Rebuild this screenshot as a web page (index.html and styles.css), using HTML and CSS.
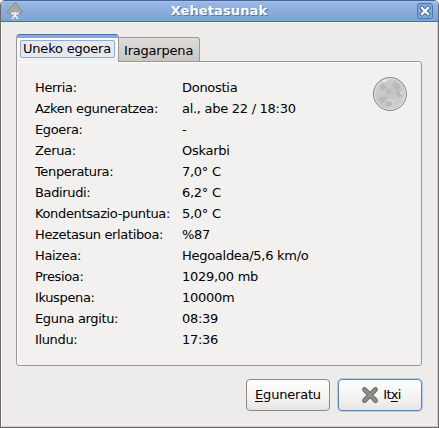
FILE: index.html
```html
<!DOCTYPE html>
<html lang="eu">
<head>
<meta charset="utf-8">
<title>Xehetasunak</title>
<link rel="stylesheet" href="styles.css">
</head>
<body>
<div class="window">
  <header class="titlebar">
    <svg class="app-icon" width="18" height="18" viewBox="0 0 18 18">
      <path d="M2.500 11.500 L1 9.500 L3.500 7.500 L5 4.500 L7.500 4 L8 1 L10.500 1 L11.500 4 L13 5 L14 7.500 L16.500 9 L15 11.500 L12 11 L9 12 L6 11 Z" fill="#a9a9a0" stroke="#85857c" stroke-width=".8"/>
      <path d="M9 10v4M5 11l4 1 4-1M9 13l-3 4M9 13l3 4" fill="none" stroke="#f4f6fa" stroke-width="1.300"/>
    </svg>
    <h1 class="title">Xehetasunak</h1>
    <svg class="close" width="16" height="16" viewBox="0 0 16 16">
      <rect x=".5" y=".5" width="15" height="15" rx="2.500" fill="#86a9d9" stroke="#4c76ae"/>
      <path d="M5 5l6 6M11 5l-6 6" stroke="#3e689f" stroke-width="4.400" stroke-linecap="square"/>
      <path d="M5 5l6 6M11 5l-6 6" stroke="#fff" stroke-width="2.300" stroke-linecap="square"/>
    </svg>
  </header>
  <main class="content">
    <nav class="tabs">
      <div class="tab active"><span class="focus">Uneko egoera</span></div>
      <div class="tab">Iragarpena</div>
    </nav>
    <section class="panel">
      <dl class="details">
        <dt>Herria:</dt><dd>Donostia</dd>
        <dt>Azken eguneratzea:</dt><dd>al., abe 22 / 18:30</dd>
        <dt>Egoera:</dt><dd>-</dd>
        <dt>Zerua:</dt><dd>Oskarbi</dd>
        <dt>Tenperatura:</dt><dd>7,0° C</dd>
        <dt>Badirudi:</dt><dd>6,2° C</dd>
        <dt>Kondentsazio-puntua:</dt><dd>5,0° C</dd>
        <dt>Hezetasun erlatiboa:</dt><dd>%87</dd>
        <dt>Haizea:</dt><dd>Hegoaldea/5,6 km/o</dd>
        <dt>Presioa:</dt><dd>1029,00 mb</dd>
        <dt>Ikuspena:</dt><dd>10000m</dd>
        <dt>Eguna argitu:</dt><dd>08:39</dd>
        <dt>Ilundu:</dt><dd>17:36</dd>
      </dl>
      <svg class="moon" width="36" height="36" viewBox="0 0 36 36">
        <defs><linearGradient id="m" x1="0" y1="0" x2="1" y2="1"><stop offset="0" stop-color="#d4d4d3"/><stop offset=".5" stop-color="#c4c4c2"/><stop offset="1" stop-color="#d6d6d4"/></linearGradient></defs>
        <circle cx="18" cy="18" r="16.500" fill="url(#m)" stroke="#858784"/>
        <circle cx="18" cy="18" r="15.500" fill="none" stroke="#dededd"/>
        <g fill="#b9b9b7">
          <circle cx="11" cy="11" r="3"/><circle cx="16.500" cy="15.500" r="2.500"/>
          <path d="M20 8q4-3 7 1t-1 5q-4 0-6-6M7 22q4-3 8 0l-2 4q-4 2-6-4M25 15q4-1 5 3t-4 3q-3-2-1-6"/>
        </g>
        <path d="M11 27l3-1-1-3 3 1 2-3 2 3 4-1-1 3 3 2-4 1-2 2-4 1-3-2z" fill="#d0d0ce"/>
        <ellipse cx="16.500" cy="28" rx="3" ry="2" fill="#bcbcba" stroke="#acacaa" stroke-width=".7"/>
        <circle cx="29.500" cy="17" r="1.300" fill="#e2e2e1"/>
        <path d="M11 5.500l4-1.500" stroke="#f2f2f2" stroke-width="1.500"/>
      </svg>
    </section>
    <footer class="actions">
      <button class="button"><span><u>E</u>guneratu</span></button>
      <button class="button default">
        <svg width="18" height="18" viewBox="0 0 18 18">
          <path d="M3.500 3.500l11 11M14.500 3.500l-11 11" stroke="#646661" stroke-width="4.800" stroke-linecap="round"/>
          <path d="M3.500 3.500l11 11M14.500 3.500l-11 11" stroke="#8e908b" stroke-width="3" stroke-linecap="round"/>
        </svg>
        <span>It<u>x</u>i</span>
      </button>
    </footer>
  </main>
</div>
</body>
</html>
```
FILE: styles.css
```css
* { box-sizing: border-box; }
body {
  margin: 0;
  background: #fff;
  font: 13px/21px "DejaVu Sans", sans-serif;
  color: #000;
}
.window {
  width: 439px;
  height: 428px;
  border: 1px solid #6b6867;
  border-top: 0;
  border-radius: 5px 5px 0 0;
  background: #edeceb;
  overflow: hidden;
}
.titlebar {
  display: flex;
  align-items: center;
  height: 22px;
  padding: 0 5px;
  border-top: 1px solid #45659a;
  border-bottom: 1px solid #4871a9;
  background: linear-gradient(#a9c4eb 0 1px, #98b7e5 1px, #7da2d3);
}
.title {
  flex: 1;
  margin: 0;
  padding-right: 3px;
  text-align: center;
  font-size: 13px;
  line-height: 20px;
  letter-spacing: 0.1px;
  color: #fff;
  text-shadow: 1px 1px 0 #4e76ad;
}
.content {
  height: 405px;
  padding: 12px 15px 0 14px;
  border-left: 1px solid #fff;
  border-right: 1px solid #cfcdca;
  border-bottom: 1px solid #cfcdca;
}
.tabs {
  display: flex;
  align-items: flex-end;
  height: 28px;
  margin-bottom: -1px;
  letter-spacing: -0.2px;
}
.tab {
  width: 81px;
  height: 25px;
  padding: 2px 0 0 5px;
  border: 1px solid #9b9895;
  border-left: 0;
  border-radius: 0 3px 0 0;
  background: linear-gradient(#dddcd9, #c9c7c3);
  white-space: nowrap;
}
.tab.active {
  position: relative;
  width: 103px;
  height: 28px;
  padding: 5px 3px 0;
  border: 1px solid #9b9895;
  border-top-color: #4871a9;
  border-bottom: 0;
  border-radius: 4px 4px 0 0;
  background: linear-gradient(#86a9d9 0 3px, #fff 3px, #f2f1f0);
}
.focus {
  display: block;
  width: 95px;
  height: 18px;
  padding-left: 2px;
  border: 1px solid #91abd3;
  border-radius: 2px;
  background: #e4e9f2;
  line-height: 15px;
}
.panel {
  display: flex;
  justify-content: space-between;
  height: 305px;
  padding: 15px 13px 0 18px;
  border: 1px solid #9b9895;
  border-radius: 0 3px 3px 3px;
  background: #f2f1f0;
  box-shadow: inset 1px 1px #fff;
}
.moon { margin-top: -1px; }
.details {
  display: grid;
  grid-template-columns: 147px 150px;
  grid-auto-rows: 21px;
  margin: 0;
  letter-spacing: -0.36px;
  white-space: nowrap;
}
dd {
  margin: 0;
  letter-spacing: -0.28px;
}
.actions {
  display: flex;
  justify-content: flex-end;
  gap: 8px;
  padding-top: 13px;
}
.button {
  display: flex;
  align-items: center;
  justify-content: center;
  gap: 4px;
  width: 84px;
  height: 32px;
  padding: 0 0 1px;
  border: 1px solid #8c8986;
  border-radius: 4px;
  background: linear-gradient(#fff, #f5f5f4 50%, #e7e6e4);
  font: inherit;
  letter-spacing: -0.2px;
  color: inherit;
  white-space: nowrap;
}
.button.default {
  padding-left: 2px;
  border-color: #5d83b8;
  box-shadow: 0 0 0 1px #b8cce8;
  letter-spacing: -0.7px;
}
u { text-underline-offset: 2px; text-decoration-skip-ink: none; }
```
